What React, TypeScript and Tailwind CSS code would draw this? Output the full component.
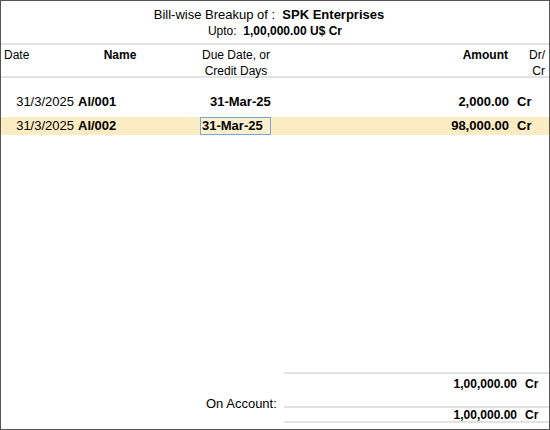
export default function App() {
  return (
    <div className="w-[550px] h-[430px] bg-white border border-[#555] flex flex-col text-[12px] text-black" style={{ fontFamily: '"Liberation Sans", Arial, sans-serif' }}>
      <div className="flex flex-col items-center pt-[6px] h-[44px] border-b-2 border-[#e2e2e2] leading-[16px]">
        <div className="text-[13px] pr-[12px]">Bill-wise Breakup of :&nbsp; <b>SPK Enterprises</b></div>
        <div>Upto:&nbsp; <b>1,00,000.00 U$ Cr</b></div>
      </div>
      <div className="flex h-[33px] pt-[2px] border-b-2 border-[#e2e2e2] leading-[16px]">
        <div className="w-[66px] pl-[3px]">Date</div>
        <div className="w-[106px] font-bold text-center">Name</div>
        <div className="w-[126px] text-center">Due Date, or<br />Credit Days</div>
        <div className="flex-1 text-right font-bold pr-[1px]">Amount</div>
        <div className="w-[40px] text-right pr-[4px]">Dr/<br />Cr</div>
      </div>
      <div className="h-[15px]" />
      <div className="flex h-[17px] items-center">
        <div className="w-[77px] text-right pr-[4px] text-[13px]">31/3/2025</div>
        <div className="w-[122px] font-bold text-[13px]">Al/001</div>
        <div className="w-[85px] pl-[10px] font-bold text-[13px]">31-Mar-25</div>
        <div className="flex-1 text-right font-bold text-[13px]">2,000.00</div>
        <div className="w-[40px] pl-[8px] font-bold text-[13px]">Cr</div>
      </div>
      <div className="h-[7px]" />
      <div className="flex h-[18px] items-center bg-[#fcecc3]">
        <div className="w-[77px] text-right pr-[4px] text-[13px]">31/3/2025</div>
        <div className="w-[122px] font-bold text-[13px]">Al/002</div>
        <div className="w-[85px]"><span className="inline-block w-[71px] h-[18px] leading-[16px] pl-[1px] font-bold text-[13px] border border-[#7aa6d8] bg-[#fdf0cf]">31-Mar-25</span></div>
        <div className="flex-1 text-right font-bold text-[13px]">98,000.00</div>
        <div className="w-[40px] pl-[8px] font-bold text-[13px]">Cr</div>
      </div>
      <div className="flex-1" />
      <div className="flex">
        <div className="w-[283px] flex items-end justify-end pr-[3px] pb-[16px]"><span className="w-[75px] text-[13px]">On Account:</span></div>
        <div className="flex-1 flex flex-col">
          <div className="border-t-2 border-[#e2e2e2] h-[34px] flex font-bold pt-[1px]">
            <div className="flex-1 text-right">1,00,000.00</div>
            <div className="w-[32px] pl-[8px]">Cr</div>
          </div>
          <div className="border-t-2 border-b-2 border-[#e2e2e2] h-[17px] flex font-bold leading-[14px]">
            <div className="flex-1 text-right">1,00,000.00</div>
            <div className="w-[32px] pl-[8px]">Cr</div>
          </div>
          <div className="h-[6px]" />
        </div>
      </div>
    </div>
  );
}
